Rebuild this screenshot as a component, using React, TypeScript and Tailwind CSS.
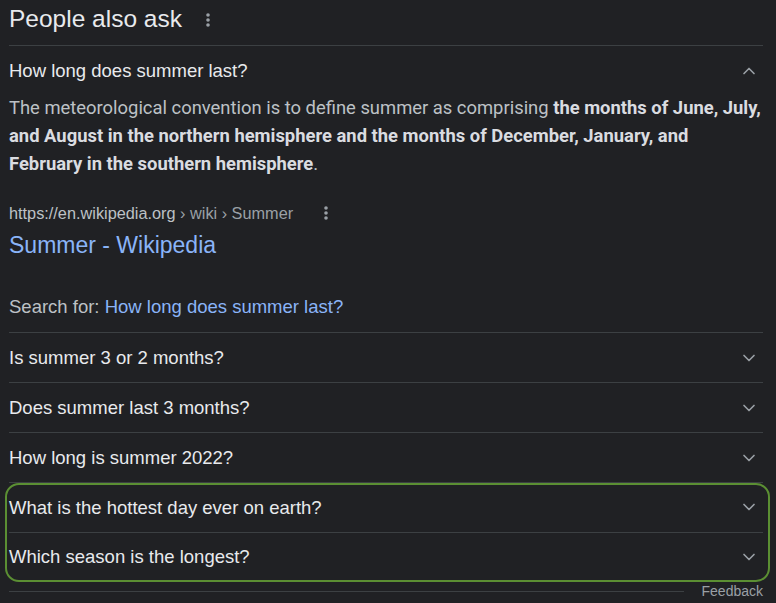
import { ChevronDown, ChevronUp } from 'lucide-react';

const questions = [
  'Is summer 3 or 2 months?',
  'Does summer last 3 months?',
  'How long is summer 2022?',
];

function Dots() {
  return (
    <svg width="4" height="14" viewBox="0 0 4 14" className="fill-[#9aa0a6]">
      <circle cx="2" cy="2" r="1.8" />
      <circle cx="2" cy="7" r="1.8" />
      <circle cx="2" cy="12" r="1.8" />
    </svg>
  );
}

function Row({ text, className = 'h-[50px] border-b border-[#3c4043]' }: { text: string; className?: string }) {
  return (
    <div className={`flex items-center justify-between ${className}`}>
      <span className="text-[18.5px] text-[#e8eaed]">{text}</span>
      <ChevronDown size={20} strokeWidth={2} className="mr-[4px] text-[#9aa0a6]" />
    </div>
  );
}

export default function App() {
  return (
    <div className="h-[603px] w-[776px] overflow-hidden bg-[#202124] pl-[9px] pr-[13px] font-['Liberation_Sans',Arial,sans-serif]">
      {/* header */}
      <div className="flex h-[46px] items-center gap-[24px] border-b border-[#3c4043] pb-[6px]">
        <h2 className="text-[24.5px] leading-none text-[#e8eaed]">People also ask</h2>
        <Dots />
      </div>

      {/* expanded question */}
      <div className="flex h-[49px] items-center justify-between">
        <span className="text-[18.5px] text-[#e8eaed]">How long does summer last?</span>
        <ChevronUp size={20} strokeWidth={2} className="mr-[4px] text-[#9aa0a6]" />
      </div>
      <p className="-mt-[1px] font-['Roboto',Arial,sans-serif] text-[18.4px] leading-[28px] text-[#bdc1c6]">
        The meteorological convention is to define summer as comprising{' '}
        <b className="font-bold text-[#dadce0]">
          the months of June, July, and August in the northern hemisphere and the months of December, January, and
          February in the southern hemisphere
        </b>
        .
      </p>

      <div className="mt-[23px] flex items-center gap-[31px] text-[16.3px]">
        <span className="text-[#bdc1c6]">
          https://en.wikipedia.org <span className="text-[#9aa0a6]">› wiki › Summer</span>
        </span>
        <Dots />
      </div>
      <div className="mt-[6px] text-[23px] leading-[28px] text-[#8ab4f8]">Summer - Wikipedia</div>

      <div className="mt-[34px] flex h-[40px] items-start border-b border-[#3c4043] text-[18.5px] text-[#bdc1c6]">
        <span>
          Search for: <span className="text-[#8ab4f8]">How long does summer last?</span>
        </span>
      </div>

      {questions.map((q) => (
        <Row key={q} text={q} />
      ))}

      {/* highlighted pair */}
      <div className="-ml-[4px] -mr-[7px] rounded-[14px] border-2 border-[#5b8f33] pl-[2px] pr-[5px]">
        <Row text="What is the hottest day ever on earth?" className="h-[48px] border-b border-[#3c4043] pb-[3px]" />
        <Row text="Which season is the longest?" className="h-[47px]" />
      </div>

      <div className="flex h-[18px] items-center gap-[18px]">
        <div className="h-px flex-1 bg-[#3c4043]" />
        <span className="text-[14px] leading-none text-[#9aa0a6]">Feedback</span>
      </div>
    </div>
  );
}
